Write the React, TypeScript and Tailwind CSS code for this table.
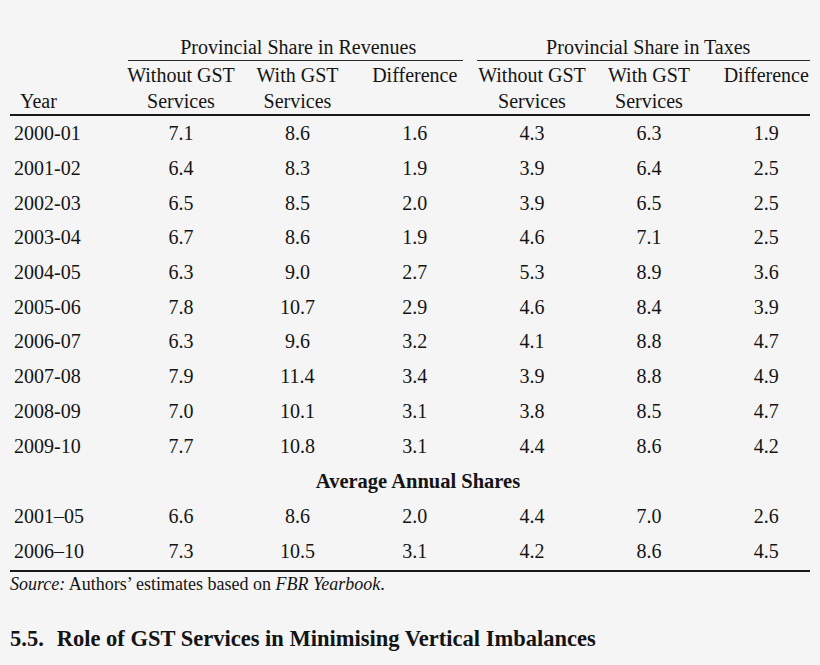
const rows = [
  ["2000-01", "7.1", "8.6", "1.6", "4.3", "6.3", "1.9"],
  ["2001-02", "6.4", "8.3", "1.9", "3.9", "6.4", "2.5"],
  ["2002-03", "6.5", "8.5", "2.0", "3.9", "6.5", "2.5"],
  ["2003-04", "6.7", "8.6", "1.9", "4.6", "7.1", "2.5"],
  ["2004-05", "6.3", "9.0", "2.7", "5.3", "8.9", "3.6"],
  ["2005-06", "7.8", "10.7", "2.9", "4.6", "8.4", "3.9"],
  ["2006-07", "6.3", "9.6", "3.2", "4.1", "8.8", "4.7"],
  ["2007-08", "7.9", "11.4", "3.4", "3.9", "8.8", "4.9"],
  ["2008-09", "7.0", "10.1", "3.1", "3.8", "8.5", "4.7"],
  ["2009-10", "7.7", "10.8", "3.1", "4.4", "8.6", "4.2"],
];

const averages = [
  ["2001–05", "6.6", "8.6", "2.0", "4.4", "7.0", "2.6"],
  ["2006–10", "7.3", "10.5", "3.1", "4.2", "8.6", "4.5"],
];

// column template shared by header and body
const cols = "grid grid-cols-[113px_116px_117px_117.5px_117px_117px_102.5px]";

function Row({ cells, h }: { cells: string[]; h: string }) {
  return (
    <div className={`${cols} ${h} items-center`}>
      <div className="pl-[4px]">{cells[0]}</div>
      <div className="text-center">{cells[1]}</div>
      <div className="text-center">{cells[2]}</div>
      <div className="text-center">{cells[3]}</div>
      <div className="text-center">{cells[4]}</div>
      <div className="text-center">{cells[5]}</div>
      <div className="text-center pl-[15px]">{cells[6]}</div>
    </div>
  );
}

export default function App() {
  return (
    <div
      className="min-h-screen w-[820px] h-[665px] bg-[#f5f5f5] text-[#141414] pt-[34px] px-[10px] overflow-hidden"
      style={{ fontFamily: '"Liberation Serif", "Times New Roman", serif' }}
    >
      <div className="w-[800px] text-[20px]">
        {/* Group headers */}
        <div className={`${cols} leading-[26px]`}>
          <div />
          <div className="col-span-3">
            <div className="text-center">Provincial Share in Revenues</div>
            <div className="ml-[5px] mr-[10.5px] border-t-[1.5px] border-[#2a2a2a]" />
          </div>
          <div className="col-span-3">
            <div className="text-center pl-[13px]">Provincial Share in Taxes</div>
            <div className="ml-[3.5px] border-t-[1.5px] border-[#2a2a2a]" />
          </div>
        </div>

        {/* Column headers */}
        <div className={`${cols} leading-[26px] pt-[1px]`}>
          <div className="pl-[10px] pt-[26px]">Year</div>
          <div className="text-center">Without GST<br />Services</div>
          <div className="text-center">With GST<br />Services</div>
          <div className="text-center">Difference</div>
          <div className="text-center">Without GST<br />Services</div>
          <div className="text-center">With GST<br />Services</div>
          <div className="text-center pl-[15px]">Difference</div>
        </div>
        <div className="border-t-2 border-[#1a1a1a]" />

        {rows.map((r) => (
          <Row key={r[0]} cells={r} h="h-[34.7px]" />
        ))}

        <div className="h-[36px] flex items-center justify-center font-bold text-[20.5px] pl-[16px]">
          Average Annual Shares
        </div>

        {averages.map((r) => (
          <Row key={r[0]} cells={r} h="h-[34.5px]" />
        ))}
        <div className="mt-[2px] border-t-2 border-[#1a1a1a]" />

        <div className="text-[18px] leading-[22px] pt-[1px]">
          <i>Source:</i> Authors’ estimates based on <i>FBR Yearbook</i>.
        </div>

        <h2 className="mt-[30px] text-[22.5px] font-bold leading-[28px]">
          5.5.<span className="ml-[13px]">Role of GST Services in Minimising Vertical Imbalances</span>
        </h2>
      </div>
    </div>
  );
}
